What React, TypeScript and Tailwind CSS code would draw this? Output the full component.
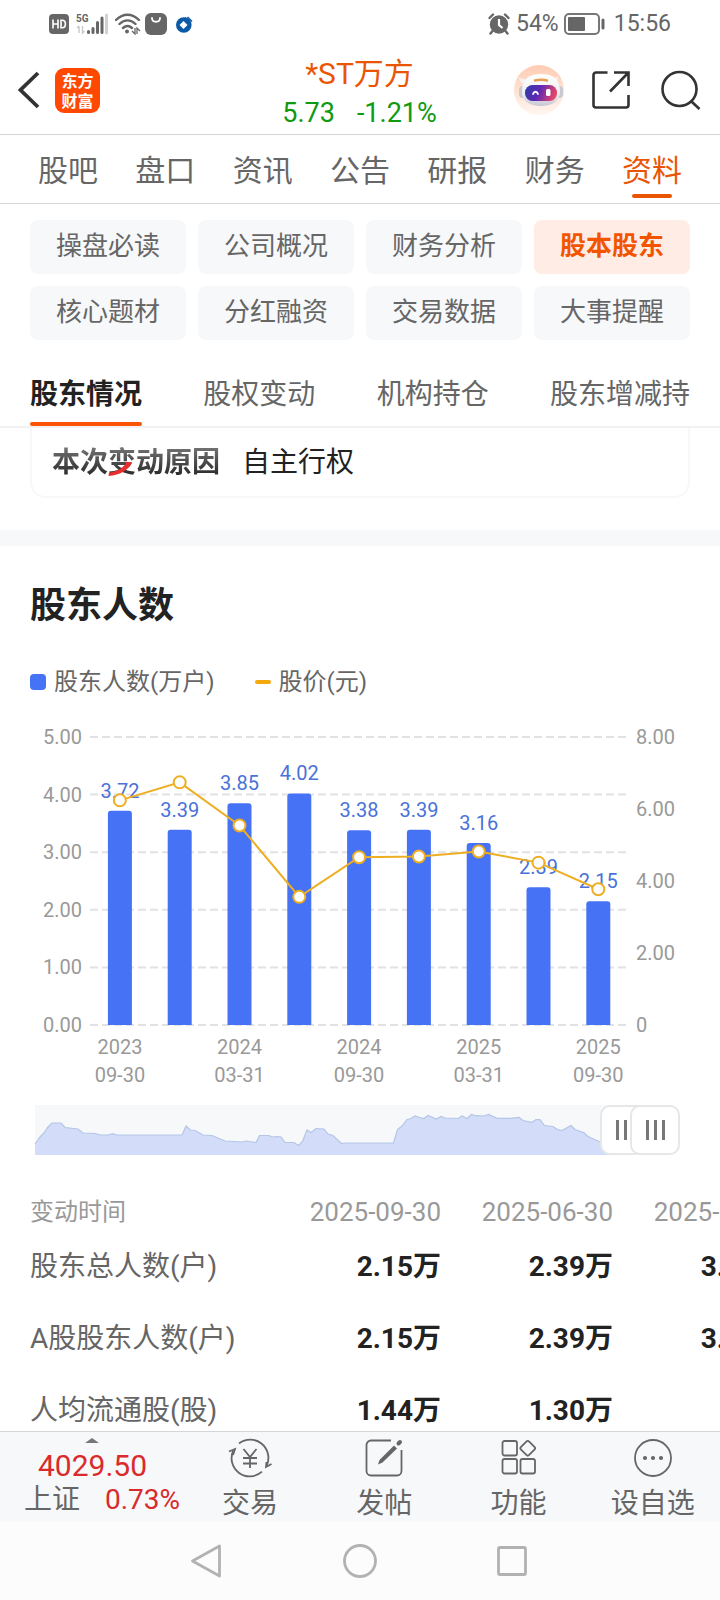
import { useState } from 'react';
import type { ReactNode } from 'react';

const mainTabs = ['股吧', '盘口', '资讯', '公告', '研报', '财务', '资料'];

const sections = [
  '操盘必读', '公司概况', '财务分析', '股本股东',
  '核心题材', '分红融资', '交易数据', '大事提醒',
];

const subTabs = ['股东情况', '股权变动', '机构持仓', '股东增减持'];

interface Period {
  year?: string;
  day?: string;
  holders: number;
  price: number;
}

const periods: Period[] = [
  { year: '2023', day: '09-30', holders: 3.72, price: 6.24 },
  { holders: 3.39, price: 6.74 },
  { year: '2024', day: '03-31', holders: 3.85, price: 5.54 },
  { holders: 4.02, price: 3.56 },
  { year: '2024', day: '09-30', holders: 3.38, price: 4.66 },
  { holders: 3.39, price: 4.68 },
  { year: '2025', day: '03-31', holders: 3.16, price: 4.82 },
  { holders: 2.39, price: 4.51 },
  { year: '2025', day: '09-30', holders: 2.15, price: 3.77 },
];

const tableDates = ['2025-09-30', '2025-06-30', '2025-03-31'];

const tableRows = [
  { label: '股东总人数(户)', values: ['2.15万', '2.39万', '3.16万'] },
  { label: 'A股股东人数(户)', values: ['2.15万', '2.39万', '3.16万'] },
  { label: '人均流通股(股)', values: ['1.44万', '1.30万', '9827'] },
];

const historyLine =
  '0,39 5,32 9,28 13,22 17,18 26,18 30,22.5 43,24 48,28 60.5,28.5 65,30 73,30 77.5,28.7 82,30 147,30 151,21 155.5,25 160,25.5 168,30 177,30.5 190,36 207,37 211.5,36 221,37.5 224.5,30.5 233.5,30.5 238,32 242,31.5 246,32 250,37.5 259,37.5 263.5,40.5 267.5,36.5 272,25 276,27.5 281,23.5 289,24 293,29 298,30.5 306.5,38.5 310,38 358.5,38 362.5,24.5 367,21 372,14.5 376,13.5 380,11 384.5,12.5 389,13.5 393,10.5 401.5,14 406,11.5 410,13 423,13.5 427,11 432,13.5 436.5,9.5 440.5,10.7 449,11 453.5,9.5 462,13.3 475,13.3 484,12.3 488,15.5 497,17.3 501,14.5 505,14.7 509.5,20.5 518,21.5 522.5,24.5 527,25.5 536,20.5 540,24.5 549,27.7 553,31.5 564,36.5 580,41';

function StatusBar() {
  return (
    <div className="flex h-[46px] shrink-0 items-center justify-between px-[49px] pt-0.5 text-[23px] text-[#666]">
      <div className="flex items-center">
        <svg width="20" height="20" viewBox="0 0 20 20">
          <rect width="20" height="20" rx="4" fill="#666" />
          <path d="M4 5.500v9M9 5.500v9M4 10h5M12 6.200v7.600h1.200c2 0 3.200-1.500 3.200-3.800s-1.200-3.800-3.200-3.800z" stroke="#fff" strokeWidth="1.600" fill="none" />
        </svg>
        <svg className="ml-[7px]" width="32" height="22" viewBox="0 0 32 22">
          <text x="0" y="9" fontSize="10" fontWeight="700" fill="#666">5G</text>
          <path d="M3 13v7M1 15l2-2M6.500 13v7l2-2" stroke="#c9c9c9" strokeWidth="1.400" fill="none" />
          <path d="M12.500 18.500v1M17 15.500v4M21.500 9.500v10M26 5v14.500" stroke="#666" strokeWidth="3" strokeLinecap="round" />
          <path d="M30.500 2v18" stroke="#d2d2d2" strokeWidth="3" strokeLinecap="round" />
        </svg>
        <svg className="ml-[7px]" width="26" height="22" viewBox="0 0 26 22">
          <path d="M1 7C8 0 17 0 24 7M4.500 11c5-4.800 11-4.800 16 0M8 15c3-2.600 6-2.600 9 0" stroke="#666" strokeWidth="2.400" fill="none" strokeLinecap="round" />
          <circle cx="12" cy="18.500" r="2" fill="#666" />
          <path d="M20 15v6l-3-3M22 21v-6l3 3" stroke="#666" strokeWidth="1.300" fill="none" />
        </svg>
        <svg className="ml-1" width="22" height="22" viewBox="0 0 22 22">
          <rect width="22" height="22" rx="6" fill="#666" />
          <path d="M7 5c0 5 8 5 8 0" stroke="#fff" strokeWidth="1.800" fill="none" strokeLinecap="round" />
        </svg>
        <svg className="ml-[9px]" width="17" height="17" viewBox="0 0 17 17">
          <circle cx="7.800" cy="9" r="7.800" fill="#0b5aa5" />
          <path d="M10 0h7v7z" fill="#fff" />
          <path d="M9 1.500l6 6M11.500 1l4.500 4.500" stroke="#0b5aa5" strokeWidth="1.600" />
          <path d="M7.500 5L11.500 9l-4 4-4-4z" fill="#fff" />
        </svg>
      </div>
      <div className="flex items-center">
        <svg width="22" height="22" viewBox="0 0 22 22">
          <circle cx="11" cy="11.500" r="9.200" fill="#666" />
          <path d="M1.500 5l3.500-3.500M20.500 5L17 1.500M4.500 18l-2 2.500M17.500 18l2 2.500" stroke="#666" strokeWidth="2.400" strokeLinecap="round" />
          <path d="M11 6v6l3.500 3" stroke="#fff" strokeWidth="2.200" fill="none" />
        </svg>
        <span className="ml-[6px]">54%</span>
        <svg className="ml-[5px]" width="41" height="22" viewBox="0 0 41 22">
          <rect x="1" y="1" width="34" height="20" rx="4" fill="none" stroke="#777" strokeWidth="2" />
          <rect x="4" y="4" width="17" height="14" rx="1" fill="#666" />
          <path d="M39 7v8" stroke="#666" strokeWidth="3" strokeLinecap="round" />
        </svg>
        <span className="ml-[9px]">15:56</span>
      </div>
    </div>
  );
}

function RobotAvatar() {
  return (
    <svg width="50" height="50" viewBox="0 0 50 50">
      <defs>
        <linearGradient id="halo" x1="0" y1="0" x2="0" y2="1">
          <stop offset="0" stopColor="#ffccb3" />
          <stop offset="1" stopColor="#fff6f1" />
        </linearGradient>
        <linearGradient id="visor" x1="0" y1="0" x2="1" y2="0.200">
          <stop offset="0" stopColor="#2f3aa8" />
          <stop offset="0.500" stopColor="#5f28b4" />
          <stop offset="1" stopColor="#e2456a" />
        </linearGradient>
        <linearGradient id="shell" x1="0" y1="0" x2="0" y2="1">
          <stop offset="0" stopColor="#ffffff" />
          <stop offset="0.600" stopColor="#efeff3" />
          <stop offset="1" stopColor="#c6c7d2" />
        </linearGradient>
      </defs>
      <circle cx="25" cy="25" r="25" fill="url(#halo)" />
      <path d="M5 12.500c1 5 4 7 8 7l4-6c-5 1-9 1-12-1zM44 11.500c0 5-3 7-7 7l-4-6c5 1 8 1 11-1z" fill="#f3f3f6" />
      <rect x="5" y="21" width="9" height="12" rx="4" fill="#c9c9d2" />
      <rect x="40" y="21" width="9" height="12" rx="4" fill="#c9c9d2" />
      <path d="M8 27C8 14 15 9 27 9s19 5 19 18c0 9-8 14-19 14S8 36 8 27z" fill="url(#shell)" />
      <path d="M21 15.500c4-1 8-1 12 0" stroke="#e8a050" strokeWidth="2.400" fill="none" strokeLinecap="round" />
      <rect x="11" y="20" width="32" height="16" rx="7.500" fill="url(#visor)" />
      <path d="M19 29c1-3 4-3 5 0" stroke="#fff" strokeWidth="1.800" fill="none" strokeLinecap="round" />
      <rect x="32" y="24" width="4.500" height="7" rx="1.500" fill="#fff" />
    </svg>
  );
}

function Header() {
  return (
    <header className="flex h-[89px] shrink-0 items-center justify-between border-b border-[#d6d6d6] pr-[19px] pl-[18px]">
      <div className="flex flex-1 items-center">
        <button aria-label="返回">
          <svg width="22" height="38" viewBox="0 0 22 38" fill="none" stroke="#333" strokeWidth="3.800">
            <path d="M20 2L2.500 19 20 36" />
          </svg>
        </button>
        <a
          href="#home"
          className="ml-[15px] flex size-[45px] flex-col items-center justify-center rounded-[9px] bg-[#ff4800] font-['Noto_Sans_CJK_SC',sans-serif] text-[16px] leading-5 font-bold text-white"
        >
          <span>东方</span>
          <span>财富</span>
        </a>
      </div>
      <div className="pt-[6px] text-center">
        <h1 className="text-[30px] leading-10 text-[#ea5504]">*ST万方</h1>
        <p className="flex justify-center gap-[22px] text-[27px] leading-[38px] text-[#109a10]">
          <span>5.73</span>
          <span>-1.21%</span>
        </p>
      </div>
      <div className="flex flex-1 items-center justify-end">
        <button aria-label="智能助手">
          <RobotAvatar />
        </button>
        <button aria-label="分享" className="ml-7">
          <svg width="38" height="38" viewBox="0 0 38 38" fill="none" stroke="#333" strokeWidth="2.600">
            <path d="M15.500 1.500H4A2.500 2.500 0 0 0 1.500 4v30A2.500 2.500 0 0 0 4 36.500h30a2.500 2.500 0 0 0 2.500-2.500V24" />
            <path d="M22 1.500h14.500V15M36.500 1.500L18 20.500" />
          </svg>
        </button>
        <button aria-label="搜索" className="ml-[31px]">
          <svg width="40" height="40" viewBox="0 0 40 40" fill="none" stroke="#333" strokeWidth="2.600">
            <circle cx="18.500" cy="19" r="17" />
            <path d="M30.500 31.500L38.500 39" />
          </svg>
        </button>
      </div>
    </header>
  );
}

function HoldersChart() {
  const base = 315;
  const step = 59.8;
  const x = (i: number) => 119.9 + i * step;
  const barTop = (v: number) => base - v * 57.6;
  const priceY = (v: number) => base - v * 36;

  return (
    <svg className="mt-3 block w-full" viewBox="0 0 720 395" fontSize="20" role="img" aria-label="股东人数与股价">
      {[0, 1, 2, 3, 4, 5].map((v) => (
        <g key={v}>
          <line x1="90" x2="626" y1={barTop(v)} y2={barTop(v)} stroke="#e2e2e2" strokeWidth="2" strokeDasharray="8 4" />
          <text x="82" y={barTop(v) + 7} textAnchor="end" fill="#999">{v.toFixed(2)}</text>
        </g>
      ))}
      {[0, 2, 4, 6, 8].map((v) => (
        <text key={v} x="636" y={priceY(v) + 7} fill="#999">{v === 0 ? '0' : v.toFixed(2)}</text>
      ))}
      {periods.map((p, i) => (
        <g key={i} textAnchor="middle">
          <path
            d={`M${x(i) - 12} ${base}V${barTop(p.holders) + 3}q0-3 3-3h18q3 0 3 3V${base}z`}
            fill="#4672f6"
          />
          <text x={x(i)} y={barTop(p.holders) - 13} fill="#4a72d8">{p.holders.toFixed(2)}</text>
          {p.year && <text x={x(i)} y="344" fill="#999">{p.year}</text>}
          {p.day && <text x={x(i)} y="372" fill="#999">{p.day}</text>}
        </g>
      ))}
      <polyline
        points={periods.map((p, i) => `${x(i)},${priceY(p.price)}`).join(' ')}
        fill="none"
        stroke="#eeae22"
        strokeWidth="2"
      />
      {periods.map((p, i) => (
        <circle key={i} cx={x(i)} cy={priceY(p.price)} r="6" fill="#fff" stroke="#eeae22" strokeWidth="2" />
      ))}
    </svg>
  );
}

const rangeClass =
  'pointer-events-none absolute inset-0 h-[50px] w-full appearance-none bg-transparent [&::-webkit-slider-thumb]:pointer-events-auto [&::-webkit-slider-thumb]:size-[50px] [&::-webkit-slider-thumb]:appearance-none [&::-webkit-slider-thumb]:rounded-[10px] [&::-webkit-slider-thumb]:border-2 [&::-webkit-slider-thumb]:border-[#e6e7e9] [&::-webkit-slider-thumb]:bg-white [&::-webkit-slider-thumb]:bg-[linear-gradient(90deg,#777_0_3px,transparent_3px_8px,#777_8px_11px,transparent_11px_16px,#777_16px_19px)] [&::-webkit-slider-thumb]:bg-[length:19px_20px] [&::-webkit-slider-thumb]:bg-center [&::-webkit-slider-thumb]:bg-no-repeat';

function RangeSelector() {
  const [start, setStart] = useState(95);
  const [end, setEnd] = useState(100);

  return (
    <div className="relative mr-10 ml-[35px] h-[50px]">
      <div className="mr-6 h-full bg-[#f7f8fa]">
        <svg className="block h-full w-full" viewBox="0 0 621 50" preserveAspectRatio="none">
          <polygon points={`0,50 ${historyLine} 580,50`} fill="#d3ddfa" />
          <polyline points={historyLine} fill="none" stroke="#b4c6e6" strokeWidth="1.200" />
        </svg>
      </div>
      <input
        type="range"
        aria-label="开始时间"
        className={rangeClass}
        value={start}
        onChange={(e) => setStart(Number(e.target.value))}
      />
      <input
        type="range"
        aria-label="结束时间"
        className={rangeClass}
        value={end}
        onChange={(e) => setEnd(Number(e.target.value))}
      />
    </div>
  );
}

function HoldersTable() {
  return (
    <div className="mt-[38px] overflow-hidden pl-[30px]">
      <table className="w-[755px] table-fixed">
        <thead>
          <tr className="h-[38px] text-[#999]">
            <th className="w-[239px] text-left text-[24px] leading-8 font-normal">变动时间</th>
            {tableDates.map((date) => (
              <th key={date} className="w-[172px] text-right text-[26px] leading-8 font-normal">{date}</th>
            ))}
          </tr>
        </thead>
        <tbody className="text-[28px] leading-10">
          {tableRows.map((row) => (
            <tr key={row.label} className="h-[72px]">
              <th className="text-left font-normal whitespace-nowrap text-[#666]">{row.label}</th>
              {row.values.map((value, i) => (
                <td key={i} className="text-right font-bold text-[#222]">{value}</td>
              ))}
            </tr>
          ))}
        </tbody>
      </table>
    </div>
  );
}

function BarItem({ label, children }: { label: string; children: ReactNode }) {
  return (
    <button className="flex flex-1 flex-col items-center justify-start pt-[6px] text-[28px] leading-9 text-[#666]">
      <svg className="mb-2 shrink-0" width="44" height="40" viewBox="0 0 44 40" fill="none" stroke="#666" strokeWidth="1.800">
        {children}
      </svg>
      {label}
    </button>
  );
}

function BottomBar() {
  return (
    <nav className="flex h-[91px] shrink-0 border-t border-[#d3d5d8] bg-[#f7f8fa]">
      <button className="relative flex w-[183px] flex-col pt-4 text-left text-[#d92b2b]">
        <svg className="absolute top-[6px] left-[85px]" width="14" height="5" viewBox="0 0 14 5">
          <path d="M7 0l7 5H0z" fill="#777" />
        </svg>
        <span className="pl-[38px] text-[30px] leading-9">4029.50</span>
        <span className="flex w-full justify-between pr-[3px] pl-6 text-[28px] leading-8">
          <span className="text-[#666]">上证</span>
          <span>0.73%</span>
        </span>
      </button>
      <BarItem label="交易">
        <path d="M11 5.500A18.200 18.200 0 0 1 38.800 27.300M34 33.700A18.200 18.200 0 0 1 5.200 12.700" />
        <path d="M1 13.500l6-2.500-2 6M43.500 26l-5.500 3 0.500-5" />
        <path d="M15.500 11l6.500 8 6.500-8M22 19v11M15 20h14M15 25.500h14" />
      </BarItem>
      <BarItem label="发帖">
        <path d="M29 2.500H9A4.500 4.500 0 0 0 4.500 7v26A4.500 4.500 0 0 0 9 37.500h26a4.500 4.500 0 0 0 4.500-4.500V12" />
        <path d="M16 26.500l1.500-4.500L32 7.500l3 3L20.500 24.500z" fill="#666" stroke="none" />
        <path d="M36.500 5.500l1.500-1.500" strokeWidth="4" strokeLinecap="round" />
      </BarItem>
      <BarItem label="功能">
        <rect x="5.500" y="3" width="14.500" height="14.500" rx="2" />
        <rect x="5.500" y="21" width="14.500" height="14.500" rx="2" />
        <rect x="23.500" y="21" width="14.500" height="14.500" rx="2" />
        <rect x="25" y="4.500" width="11.500" height="11.500" rx="2" transform="rotate(45 30.750 10.250)" />
      </BarItem>
      <BarItem label="设自选">
        <circle cx="22" cy="20" r="18" />
        <g fill="#666" stroke="none">
          <circle cx="14" cy="20" r="2.100" />
          <circle cx="22" cy="20" r="2.100" />
          <circle cx="30" cy="20" r="2.100" />
        </g>
      </BarItem>
    </nav>
  );
}

function SystemNav() {
  return (
    <div className="flex h-[78px] shrink-0 items-center justify-center gap-[118px] bg-[#fcfcfc]">
      <button aria-label="后退">
        <svg width="34" height="34" viewBox="0 0 34 34" fill="none" stroke="#b2b2b2" strokeWidth="2.800" strokeLinejoin="round">
          <path d="M28.500 2v30L1.500 17z" />
        </svg>
      </button>
      <button aria-label="主屏幕">
        <svg width="34" height="34" viewBox="0 0 34 34" fill="none" stroke="#b2b2b2" strokeWidth="2.800">
          <circle cx="17" cy="17" r="15.500" />
        </svg>
      </button>
      <button aria-label="最近任务">
        <svg width="34" height="34" viewBox="0 0 34 34" fill="none" stroke="#b2b2b2" strokeWidth="2.800">
          <rect x="3.500" y="3.500" width="27" height="27" rx="1.500" />
        </svg>
      </button>
    </div>
  );
}

export default function App() {
  return (
    <div className="flex h-screen flex-col overflow-hidden bg-white font-[Roboto,'Noto_Sans_CJK_SC',sans-serif]">
      <StatusBar />
      <Header />

      <nav className="flex h-[69px] shrink-0 justify-between border-b border-[#d6d6d6] px-[38px] text-[30px]">
        {mainTabs.map((tab) => (
          <a
            key={tab}
            href={`#${tab}`}
            className={`relative leading-[72px] ${tab === '资料' ? 'text-[#ea5504]' : 'text-[#666]'}`}
          >
            {tab}
            {tab === '资料' && (
              <span className="absolute bottom-[5px] left-1/2 h-1 w-10 -translate-x-1/2 rounded-full bg-[#ea5504]" />
            )}
          </a>
        ))}
      </nav>

      <div className="grid shrink-0 grid-cols-4 gap-3 px-[30px] pt-4">
        {sections.map((name) => (
          <button
            key={name}
            className={`h-[54px] rounded-lg pb-0.5 text-[26px] ${
              name === '股本股东' ? 'bg-[#ffede5] font-bold text-[#f25500]' : 'bg-[#f7f8fa] text-[#666]'
            }`}
          >
            {name}
          </button>
        ))}
      </div>

      <div className="flex h-[88px] shrink-0 justify-between border-b-2 border-[#f2f2f2] px-[30px] text-[28px]">
        {subTabs.map((tab, i) => (
          <button key={tab} className={`relative pt-6 ${i === 0 ? 'font-bold text-[#222]' : 'text-[#666]'}`}>
            {tab}
            {i === 0 && <span className="absolute inset-x-0 bottom-0 h-1 rounded-xs bg-[#fa5404]" />}
          </button>
        ))}
      </div>

      <main className="min-h-0 flex-1 overflow-hidden">
        <div className="mx-[30px] mb-8 flex gap-[22px] rounded-b-2xl border-x-2 border-b-2 border-[#f7f8fa] px-5 pt-[15px] pb-[13px] text-[28px] leading-10">
          <span className="relative font-bold">
            <span className="bg-linear-to-b from-[#777] to-[#222] bg-clip-text text-transparent">本次变动原因</span>
            <svg className="absolute top-[19px] left-14" width="26" height="14" viewBox="0 0 26 14">
              <path d="M1 10.500C8 10 14 6.500 18 1.500L17 0h7C22 7 12 13.500 0.500 14z" fill="#e62e2e" />
            </svg>
          </span>
          <span className="text-[#222]">自主行权</span>
        </div>

        <div className="h-4 bg-[#f7f8fa]" />

        <section>
          <h2 className="px-[30px] pt-9 text-[36px] leading-12 font-bold text-[#222]">股东人数</h2>
          <div className="mt-9 flex items-center gap-10 px-[30px] text-[24px] leading-8 text-[#666]">
            <span className="flex items-center gap-2">
              <span className="size-4 rounded bg-[#4672f6]" />
              股东人数(万户)
            </span>
            <span className="flex items-center gap-2">
              <span className="h-1 w-4 rounded-full bg-[#f5a80c]" />
              股价(元)
            </span>
          </div>
          <HoldersChart />
          <RangeSelector />
          <HoldersTable />
        </section>
      </main>

      <BottomBar />
      <SystemNav />
    </div>
  );
}
